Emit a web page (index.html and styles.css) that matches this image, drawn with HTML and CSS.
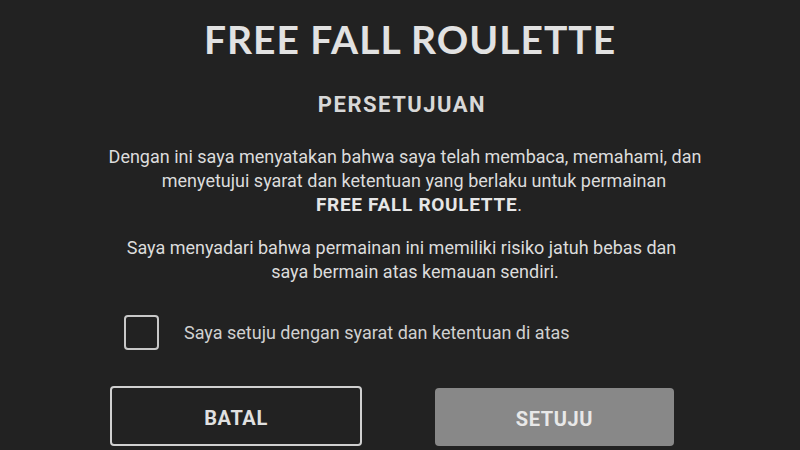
FILE: index.html
```html
<!DOCTYPE html>
<html lang="id">
<head>
<meta charset="utf-8">
<title>Free Fall Roulette</title>
<link rel="stylesheet" href="styles.css">
</head>
<body>
<main class="dialog">
  <h1 class="title">FREE FALL ROULETTE</h1>
  <h2 class="subtitle">PERSETUJUAN</h2>
  <p class="para para-1">
    <span class="line l1">Dengan ini saya menyatakan bahwa saya telah membaca, memahami, dan</span>
    <span class="line l2">menyetujui syarat dan ketentuan yang berlaku untuk permainan</span>
    <span class="line l3"><strong>FREE FALL ROULETTE</strong>.</span>
  </p>
  <p class="para para-2">
    <span class="line l4">Saya menyadari bahwa permainan ini memiliki risiko jatuh bebas dan</span>
    <span class="line l5">saya bermain atas kemauan sendiri.</span>
  </p>
  <label class="agree">
    <span class="box"></span>
    <span class="agree-text">Saya setuju dengan syarat dan ketentuan di atas</span>
  </label>
  <div class="actions">
    <button class="btn btn-cancel">BATAL</button>
    <button class="btn btn-ok">SETUJU</button>
  </div>
</main>
</body>
</html>
```
FILE: styles.css
```css
html, body {
  margin: 0;
  padding: 0;
  background: #222222;
  width: 800px;
  height: 450px;
  overflow: hidden;
}
.dialog {
  display: flex;
  flex-direction: column;
  align-items: center;
  font-family: Roboto, "Liberation Sans", sans-serif;
  color: #dcdcdc;
}
.title {
  margin: 17px 0 0 0;
  font-family: Lato, "Liberation Sans", sans-serif;
  font-weight: 700;
  font-size: 39px;
  line-height: 44px;
  letter-spacing: 1px;
  color: #e2e2e2;
  padding-left: 20px;
}
.subtitle {
  margin: 31px 0 0 0;
  font-size: 22px;
  line-height: 26px;
  font-weight: 700;
  letter-spacing: 1.5px;
  color: #d8d8d8;
  padding-left: 4px;
}
.para {
  margin: 0;
  text-align: center;
  font-size: 18px;
  line-height: 24px;
  letter-spacing: 0;
  width: 800px;
}
.line { display: block; }
.l1 { padding-left: 10px; }
.l2 { padding-left: 28px; }
.l3 { padding-left: 38px; }
.l4 { padding-left: 3px; }
.l5 { padding-left: 30px; }
.para strong {
  font-weight: 700;
  font-size: 19px;
  letter-spacing: 0.7px;
  color: #e6e6e6;
}
.para-1 { margin-top: 27px; }
.para-2 { margin-top: 19px; }
.agree {
  margin-top: 31px;
  display: flex;
  align-items: center;
  gap: 25px;
  align-self: flex-start;
  margin-left: 124px;
}
.box {
  width: 31px;
  height: 31px;
  border: 2px solid #c8c8c8;
  border-radius: 4px;
}
.agree-text {
  font-size: 18px;
  color: #d0d0d0;
}
.actions {
  margin-top: 36px;
  display: flex;
  gap: 73px;
  align-self: flex-start;
  margin-left: 110px;
  align-items: flex-end;
}
.btn {
  font-family: Roboto, "Liberation Sans", sans-serif;
  font-weight: 700;
  font-size: 20px;
  letter-spacing: 0.6px;
  border-radius: 4px;
  color: #e0e0e0;
  padding-top: 4px;
}
.btn-cancel {
  width: 252px;
  height: 60px;
  background: #222222;
  border: 2px solid #d0d0d0;
}
.btn-ok {
  width: 239px;
  height: 58px;
  background: #888888;
  border: none;
  color: #e8e8e8;
}
```
